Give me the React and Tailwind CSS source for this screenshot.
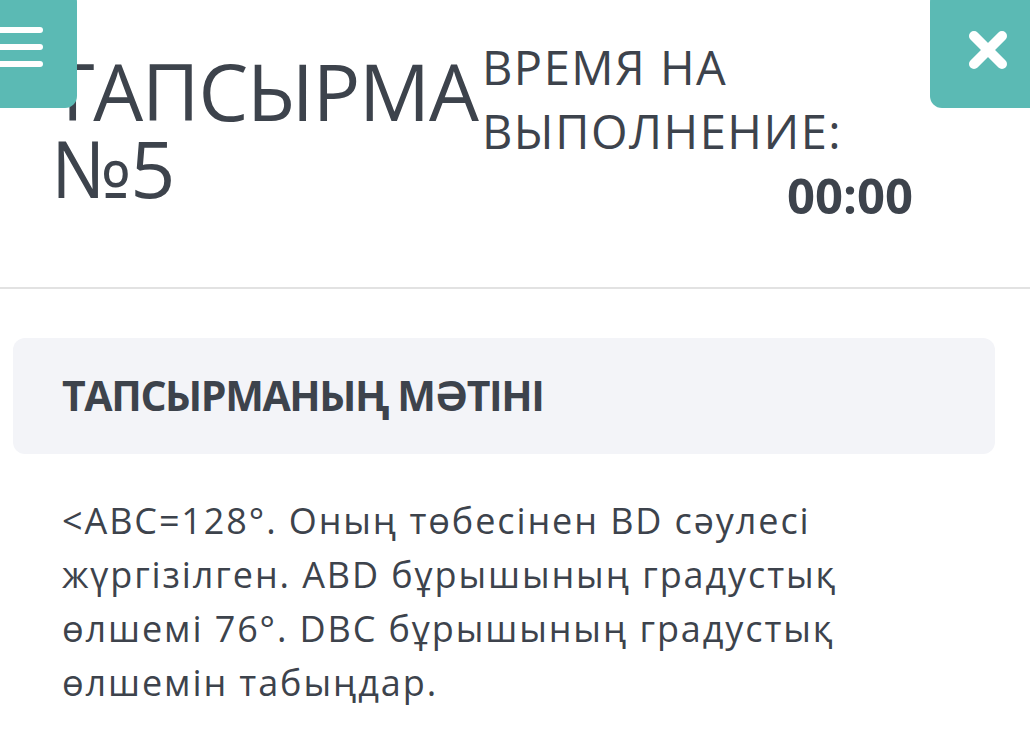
import React from "react";

const font = { fontFamily: '"Open Sans", "Noto Sans", sans-serif' };

const MenuButton = () => (
  <button className="absolute left-[-12px] top-[-10px] flex h-[118px] w-[89px] items-center justify-start rounded-xl bg-[#5bbab4] pl-[8px]">
    <svg width="49" height="44" viewBox="0 0 49 44">
      <g stroke="#ffffff" strokeWidth="6" strokeLinecap="round">
        <line x1="-4" y1="3" x2="44" y2="3" />
        <line x1="-4" y1="20" x2="44" y2="20" />
        <line x1="-4" y1="37" x2="44" y2="37" />
      </g>
    </svg>
  </button>
);

const CloseButton = () => (
  <button className="absolute right-[-12px] top-[-10px] flex h-[118px] w-[112px] items-center justify-center rounded-xl bg-[#5bbab4] pl-[4px] pt-[2px]">
    <svg width="40" height="40" viewBox="0 0 40 40">
      <g stroke="#ffffff" strokeWidth="10" strokeLinecap="round">
        <line x1="6" y1="6" x2="34" y2="34" />
        <line x1="34" y1="6" x2="6" y2="34" />
      </g>
    </svg>
  </button>
);

export default function App() {
  return (
    <div className="relative h-[750px] w-[1030px] overflow-hidden bg-white text-[#3d434c]" style={font}>
      <header className="flex h-[289px] items-start border-b-2 border-[#e2e2e2] pl-[51px] pt-[35px]">
        <h1 className="mt-[17px] w-[431px] text-[79px] font-normal leading-[77px] tracking-[-1.2px]">
          ТАПСЫРМА №5
        </h1>
        <div className="flex w-[431px] flex-col">
          <p className="text-[47px] leading-[64px] tracking-[1.5px]">
            ВРЕМЯ НА
            <br />
            ВЫПОЛНЕНИЕ:
          </p>
          <p className="self-end text-[49px] font-bold leading-[65px]">00:00</p>
        </div>
      </header>

      <MenuButton />
      <CloseButton />

      <main className="px-[13px] pt-[49px]">
        <div className="flex h-[116px] w-[982px] items-center rounded-xl bg-[#f3f4f8] px-[49px]">
          <h2 className="text-[41px] font-bold tracking-[-1.4px]">ТАПСЫРМАНЫҢ МӘТІНІ</h2>
        </div>
        <p className="w-[890px] px-[49px] pt-[40px] text-[36px] leading-[54px] tracking-[1.9px]">
          &lt;ABC=128°. Оның төбесінен BD сәулесі жүргізілген. ABD бұрышының градустық өлшемі 76°. DBC бұрышының градустық өлшемін табыңдар.
        </p>
      </main>
    </div>
  );
}
